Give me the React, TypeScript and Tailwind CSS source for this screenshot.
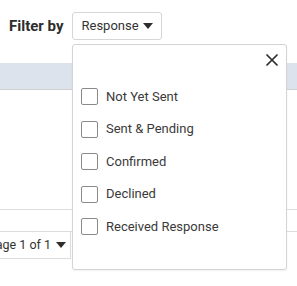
const options = ["Not Yet Sent", "Sent & Pending", "Confirmed", "Declined", "Received Response"];

function Caret() {
  return (
    <svg width="10" height="6" viewBox="0 0 10 6" className="shrink-0">
      <path d="M0 0h10L5 6z" fill="#2d2d2d" />
    </svg>
  );
}

export default function App() {
  return (
    <div
      className="relative w-[297px] h-[286px] overflow-hidden bg-white text-[#333]"
      style={{ fontFamily: 'Roboto, "Noto Sans", sans-serif' }}
    >
      <div className="flex items-center pt-[12px] pl-[9px]">
        <span className="text-[15px] font-bold text-[#2d2d2d] leading-none">Filter by</span>
        <button className="ml-[9px] flex items-center justify-between h-[28px] w-[90px] pl-[8px] pr-[8px] border border-[#d6d6d6] rounded-[3px] bg-white text-[13px] text-[#333]">
          <span>Response</span>
          <Caret />
        </button>
      </div>

      <div className="mt-[23px]">
        <div className="h-[27px] bg-[#dce3ec] border-b border-[#cfcfcf]" />
        <div className="h-[120px] border-b border-[#dcdcdc]" />
        <div className="h-[22px] border-b border-[#dcdcdc]" />
        <div className="w-[71px] h-[27px] overflow-hidden flex items-center justify-end gap-[5px] pr-[4px] whitespace-nowrap border-r border-b border-[#dcdcdc] text-[12.5px] text-[#333]">
          <span className="shrink-0">Page 1 of 1</span>
          <Caret />
        </div>
      </div>

      <div className="absolute left-[72px] top-[44px] w-[215px] h-[226px] bg-white border border-[#d4d4d4] rounded-[3px] shadow-[0_1px_2px_rgba(0,0,0,0.06)]">
        <button className="absolute right-[7px] top-[8px] w-[14px] h-[14px]">
          <svg width="14" height="14" viewBox="0 0 14 14">
            <path d="M1.5 1.5l11 11M12.5 1.5l-11 11" stroke="#2d2d2d" strokeWidth="1.7" />
          </svg>
        </button>
        <ul className="pt-[43px] pl-[8px] flex flex-col gap-[15.5px]">
          {options.map((o) => (
            <li key={o} className="flex items-center h-[17px] gap-[8px] text-[13px] text-[#3a3a3a] whitespace-nowrap">
              <span className="w-[17px] h-[17px] border border-[#8a8a8a] rounded-[2px] bg-white" />
              <span>{o}</span>
            </li>
          ))}
        </ul>
      </div>
    </div>
  );
}
